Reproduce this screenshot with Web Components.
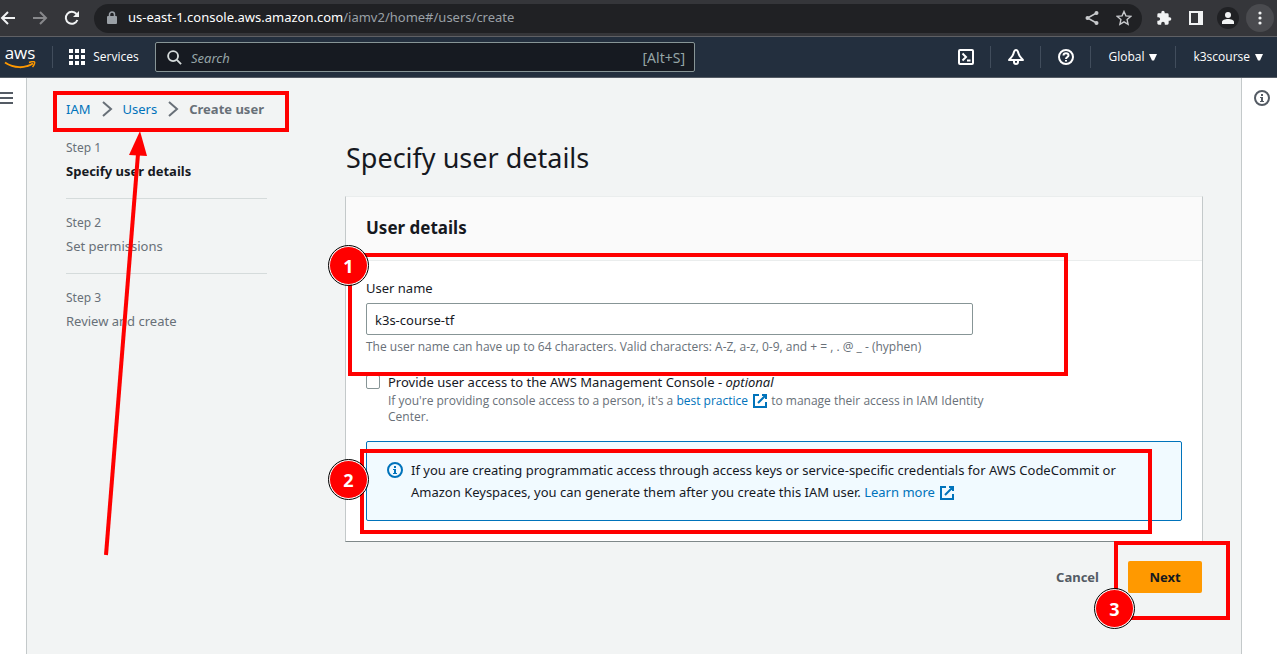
<!DOCTYPE html>
<html lang="en">
<head>
<meta charset="utf-8">
<title>Create user | IAM</title>
<style>
  html { height: 100%; }
  body { margin: 0; min-height: 100%; font-family: "Noto Sans", "Open Sans", sans-serif; font-size: 13px; line-height: 22px; color: #16191f; background: #f2f4f4; }
</style>
</head>
<body>
<iam-app></iam-app>
<script>
const define = (name, html, setup) => {
  const template = document.createElement('template');
  template.innerHTML = html;
  customElements.define(name, class extends HTMLElement {
    constructor() {
      super();
      this.attachShadow({ mode: 'open' }).append(template.content.cloneNode(true));
    }
    connectedCallback() { if (setup) setup(this, this.shadowRoot); }
  });
};

const EXTERNAL = `<svg viewBox="0 0 16 16" fill="none" stroke="currentColor" stroke-width="2"><path d="M10 2h4v4M6 10l8-8M7 2H2v12h12V9"/></svg>`;
const INFO = `<svg viewBox="0 0 16 16"><circle cx="8" cy="8" r="7" fill="none" stroke="currentColor" stroke-width="2"/><path fill="currentColor" d="M7 4h2v2H7zM6 7h3v4h1v1H6v-1h1V8H6z"/></svg>`;

define('browser-bar', `
<style>
  :host { display: flex; align-items: center; gap: 8px; height: 36px; padding: 0 3px 0 0; background: #35363a; border-bottom: 1px solid #5f6064; color: #f1f3f4; }
  button { display: grid; place-items: center; width: 24px; height: 24px; padding: 0; border: 0; background: none; color: inherit; flex: none; }
  button svg { width: 16px; height: 16px; }
  .nav { display: flex; gap: 8px; margin-right: 2px; }
  .nav button:first-child { width: 20px; justify-content: start; }
  .dim { color: #87888b; }
  .address { flex: 1; display: flex; align-items: center; gap: 11px; height: 29px; padding: 0 6px 0 13px; border-radius: 15px; background: #202124; white-space: nowrap; }
  .address span { flex: 1; color: #9aa0a6; padding-bottom: 2px; }
  .address b { font-weight: 400; color: #fff; }
  .address button { color: #c8cacd; }
  .address .share { margin-right: -3px; }
  .lock { width: 10px; height: 13px; margin-bottom: 2px; }
  .address button, .nav button { margin-bottom: 1px; }
  .tools { display: flex; align-items: center; gap: 8px; padding-left: 2px; }
  .avatar { width: 22px; height: 22px; border-radius: 50%; background: #202124; margin: 0 1px; }
  .more { width: 28px; height: 28px; border-radius: 50%; background: #4a4b4f; margin-left: -2px; }
</style>
<div class="nav">
  <button aria-label="Back"><svg viewBox="0 0 16 16" fill="none" stroke="currentColor" stroke-width="2"><path d="M15 8H2M8 2L2 8l6 6"/></svg></button>
  <button class="dim" aria-label="Forward"><svg viewBox="0 0 16 16" fill="none" stroke="currentColor" stroke-width="2"><path d="M1 8h13M8 2l6 6-6 6"/></svg></button>
  <button aria-label="Reload"><svg viewBox="0 0 16 16"><path fill="none" stroke="currentColor" stroke-width="2" d="M13.400 10A6 6 0 1 1 12.500 4"/><path fill="currentColor" d="M15 1v6H9z"/></svg></button>
</div>
<div class="address">
  <svg class="lock" viewBox="0 0 10 13"><path fill="none" stroke="#9aa0a6" stroke-width="1.500" d="M2.500 6V3.500a2.500 2.500 0 0 1 5 0V6"/><rect y="5" width="10" height="8" rx="1" fill="#9aa0a6"/></svg>
  <span><b>us-east-1.console.aws.amazon.com</b>/iamv2/home#/users/create</span>
  <button class="share" aria-label="Share"><svg viewBox="0 0 16 16"><path fill="none" stroke="currentColor" stroke-width="1.500" d="M12.500 3L3.500 8l9 5"/><circle cx="12.500" cy="3" r="2" fill="currentColor"/><circle cx="3.500" cy="8" r="2" fill="currentColor"/><circle cx="12.500" cy="13" r="2" fill="currentColor"/></svg></button>
  <button aria-label="Bookmark"><svg viewBox="0 0 16 16" fill="none" stroke="currentColor" stroke-width="1.400"><path d="M8 1.500l1.900 4.400 4.800.5-3.600 3.200 1 4.700L8 11.800l-4.100 2.500 1-4.700L1.300 6.400l4.800-.5z"/></svg></button>
</div>
<div class="tools">
  <button aria-label="Extensions"><svg viewBox="0 0 24 24"><path fill="currentColor" d="M20.500 11H19V7a2 2 0 0 0-2-2h-4V3.500a2.500 2.500 0 0 0-5 0V5H4a2 2 0 0 0-2 2v3.800h1.500a2.700 2.700 0 0 1 0 5.400H2V20c0 1.100.9 2 2 2h3.800v-1.500a2.700 2.700 0 0 1 5.400 0V22H17a2 2 0 0 0 2-2v-4h1.500a2.500 2.500 0 0 0 0-5z"/></svg></button>
  <button aria-label="Side panel"><svg viewBox="0 0 16 16"><path fill="currentColor" fill-rule="evenodd" d="M1 1h14v14H1zM3 3v10h7V3z"/></svg></button>
  <button class="avatar" aria-label="Profile"><svg viewBox="0 0 16 16" fill="currentColor"><circle cx="8" cy="5" r="3"/><path d="M2 14v-2c0-2 3-3 6-3s6 1 6 3v2z"/></svg></button>
  <button class="more" aria-label="Menu"><svg viewBox="0 0 16 16" fill="currentColor"><circle cx="8" cy="3" r="1.600"/><circle cx="8" cy="8" r="1.600"/><circle cx="8" cy="13" r="1.600"/></svg></button>
</div>`);

define('aws-nav', `
<style>
  :host { display: flex; align-items: center; height: 40px; background: #232f3e; border-bottom: 1px solid #545b64; color: #fff; font-family: "Open Sans", sans-serif; font-size: 12px; }
  button { display: flex; align-items: center; justify-content: center; gap: 5px; height: 22px; padding: 0; border: 0; border-left: 1px solid #414d5c; background: none; color: inherit; font: inherit; box-sizing: border-box; }
  .home { display: grid; justify-items: center; width: 32px; margin-left: 4px; color: inherit; font-size: 17px; line-height: 16px; text-decoration: none; }
  .home svg { width: 32px; height: 8px; }
  .services { gap: 8px; width: 103px; margin-left: 16px; }
  .services svg, .icon svg { width: 16px; height: 16px; }
  .icon { width: 50px; }
  .icon.first { border-color: transparent; }
  .region { padding: 0 18px 0 17px; }
  .account { padding: 0 14px 0 17px; }
  .caret { width: 8px; height: 7px; }
  form { display: flex; align-items: center; gap: 9px; box-sizing: border-box; width: 540px; height: 30px; padding: 2px 9px 0 11px; border: 1px solid #879596; border-radius: 2px; background: #161a21; font-family: "Noto Sans", sans-serif; font-size: 13px; color: #95a5a6; }
  form svg { width: 15px; height: 15px; margin-top: -2px; color: #d5dbdb; }
  form span { font-size: 14px; }
  input { flex: 1; min-width: 0; padding: 0; border: 0; background: none; color: inherit; font: inherit; outline: 0; }
  input::placeholder { color: #95a5a6; font-style: italic; opacity: 1; }
  .space { flex: 1; }
</style>
<a class="home" href="#" aria-label="AWS home">aws<svg viewBox="0 0 32 8"><path fill="none" stroke="#f90" stroke-width="2" d="M1 1.500c9 6 20 6 28 1"/><path fill="none" stroke="#f90" stroke-width="1.500" d="M25 1.500c3-1 5-1 5.500-.5s-.2 3-2 5"/></svg></a>
<button class="services"><svg viewBox="0 0 16 16" fill="#fff"><path d="M0 0h4v4H0zM6 0h4v4H6zM12 0h4v4h-4zM0 6h4v4H0zM6 6h4v4H6zM12 6h4v4h-4zM0 12h4v4H0zM6 12h4v4H6zM12 12h4v4h-4z"/></svg>Services</button>
<form role="search">
  <svg viewBox="0 0 16 16" fill="none" stroke="currentColor" stroke-width="2"><circle cx="6.500" cy="6.500" r="5.300"/><path d="M10.500 10.500L15 15"/></svg>
  <input type="search" placeholder="Search" aria-label="Search"><span>[Alt+S]</span>
</form>
<div class="space"></div>
<button class="icon first" aria-label="CloudShell"><svg viewBox="0 0 16 16" fill="none" stroke="#fff" stroke-width="2"><rect x="1" y="1" width="14" height="14" rx="1"/><path d="M4.500 4.500L8 8l-3.500 3.500M9 11.500h3.500"/></svg></button>
<button class="icon" aria-label="Notifications"><svg viewBox="0 0 16 16" fill="none" stroke="#fff" stroke-width="2"><path stroke-linejoin="round" d="M8 1C6.300 1 6 2.500 5.500 4.500 4.800 7.500 3 8.500 1 11h14c-2-2.500-3.800-3.500-4.500-6.500C10 2.500 9.700 1 8 1zM6 11v2c0 2.500 4 2.500 4 0v-2"/></svg></button>
<button class="icon" aria-label="Help"><svg viewBox="0 0 16 16" fill="none" stroke="#fff" stroke-width="2"><circle cx="8" cy="8" r="7"/><path d="M5.500 6.500c0-3 5-3 5 0C10.500 8 8 8 8 10M8 11v1.500"/></svg></button>
<button class="region">Global <svg class="caret" viewBox="0 0 8 7"><path fill="#fff" d="M0 0h8L5 6.500H3z"/></svg></button>
<button class="account">k3scourse <svg class="caret" viewBox="0 0 8 7"><path fill="#fff" d="M0 0h8L5 6.500H3z"/></svg></button>`);

define('side-rail', `
<style>
  :host { display: block; box-sizing: border-box; background: #fff; color: #545b64; }
  button { display: block; margin: 12px 0; padding: 0; border: 0; background: none; color: inherit; }
  ::slotted(svg) { display: block; }
</style>
<button><slot></slot></button>`, (el, root) => root.querySelector('button').setAttribute('aria-label', el.getAttribute('label')));

define('crumb-trail', `
<style>
  :host { display: block; }
  ol { display: flex; align-items: center; gap: 10px; list-style: none; margin: 0; padding: 0; }
  li { display: flex; align-items: center; gap: 10px; }
  .chevron { width: 12px; height: 16px; }
  a { color: #0073bb; text-decoration: none; }
  b { color: #687078; }
</style>
<nav aria-label="Breadcrumbs"><ol>
  <li><a href="#iam">IAM</a></li>
  <li><svg class="chevron" viewBox="0 0 12 16"><path fill="none" stroke="#687078" stroke-width="2" d="M2 1l8 7-8 7"/></svg><a href="#users">Users</a></li>
  <li><svg class="chevron" viewBox="0 0 12 16"><path fill="none" stroke="#687078" stroke-width="2" d="M2 1l8 7-8 7"/></svg><b>Create user</b></li>
</ol></nav>`);

define('wizard-step', `
<style>
  :host { display: block; padding-bottom: 16px; color: #687078; }
  :host(:not(:last-of-type)) { border-bottom: 1px solid #d5dbdb; margin-bottom: 16px; }
  small { display: block; font-size: 12px; line-height: 16px; margin-bottom: 4px; }
  :host([active]) div { color: #16191f; font-weight: 700; }
</style>
<small></small><div><slot></slot></div>`, (el, root) => { root.querySelector('small').textContent = 'Step ' + el.getAttribute('number'); });

define('detail-card', `
<style>
  :host { display: block; background: #fff; border: 1px solid #eaeded; border-left-color: #c4c9ca; border-right-color: #c4c9ca; border-bottom-color: #7f8889; }
  h2 { margin: 0; padding: 19px 20px 20px; font-size: 17px; line-height: 24px; background: #fafafa; border-bottom: 1px solid #eaeded; }
  div { padding: 16px 20px 20px; }
</style>
<h2><slot name="title"></slot></h2><div><slot></slot></div>`);

define('text-field', `
<style>
  :host { display: block; max-width: 607px; }
  label { display: block; margin-bottom: 4px; }
  input { display: block; box-sizing: border-box; width: 100%; height: 32px; padding: 2px 8px 0; border: 1px solid #879596; border-radius: 2px; background: #fff; color: inherit; font: inherit; }
  p { margin: 4px 0 0; font-family: "Open Sans", sans-serif; font-size: 12px; line-height: 16px; color: #687078; }
</style>
<label for="field"></label><input id="field" type="text" aria-describedby="hint"><p id="hint"><slot></slot></p>`, (el, root) => {
  root.querySelector('label').textContent = el.getAttribute('label');
  root.querySelector('input').value = el.getAttribute('value');
});

define('check-field', `
<style>
  :host { display: grid; grid-template-columns: 14px 1fr; column-gap: 8px; max-width: 640px; }
  input { appearance: none; box-sizing: border-box; width: 14px; height: 14px; margin: 4px 0; border: 1px solid #879596; border-radius: 2px; background: #fff; }
  p { grid-column: 2; margin: 0; font-family: "Open Sans", sans-serif; font-size: 12px; line-height: 16px; color: #687078; }
</style>
<input id="check" type="checkbox"><label for="check"><slot name="label"></slot></label><p><slot></slot></p>`);

define('external-link', `
<style>
  :host { display: inline; }
  a { color: #0073bb; text-decoration: none; white-space: nowrap; }
  svg { width: 16px; height: 16px; margin: -2px 0 -4px 4px; }
</style>
<a href="#"><slot></slot>${EXTERNAL}</a>`);

define('info-alert', `
<style>
  :host { display: flex; gap: 8px; padding: 17px 20px; border: 1px solid #0073bb; border-radius: 2px; background: #f1faff; }
  svg { flex: none; width: 16px; height: 16px; margin-top: 3px; color: #0073bb; }
</style>
${INFO}<div><slot></slot></div>`);

define('action-bar', `
<style>
  :host { display: flex; justify-content: flex-end; gap: 8px; padding-right: 1px; }
  button { height: 32px; padding: 0 21px; border: 0; border-radius: 2px; background: none; color: #545b64; font: inherit; font-weight: 700; }
  .primary { min-width: 74px; background: #f90; color: #16191f; }
</style>
<button>Cancel</button><button class="primary">Next</button>`);

define('mark-box', `
<style>
  :host { position: absolute; box-sizing: border-box; border: 4px solid #f00; pointer-events: none; }
  b { position: absolute; display: grid; place-items: center; width: 37px; height: 37px; border: 1px solid #fff; border-radius: 50%; outline: 1px solid #000; background: #f00; color: #fff; font-size: 18px; }
  :host([corner=top]) b { left: -23px; top: -11px; }
  :host([corner=left]) b { left: -35px; top: 7px; }
  :host([corner=bottom]) b { left: -23px; bottom: -12px; }
</style>`, (el, root) => {
  if (!el.hasAttribute('number')) return;
  const badge = document.createElement('b');
  badge.textContent = el.getAttribute('number');
  root.append(badge);
});

define('iam-app', `
<style>
  :host { display: flex; flex-direction: column; min-height: 100vh; }
  .shell { flex: 1; display: grid; grid-template-columns: 27px 1fr 36px; }
  .left { border-right: 1px solid #c4c9ca; }
  .right { border-left: 1px solid #c4c9ca; padding-left: 12px; }
  main { position: relative; padding: 20px 38px 24px 39px; }
  .columns { display: grid; grid-template-columns: 201px 1fr; column-gap: 78px; margin-top: 20px; }
  h1 { margin: 0 0 20px 1px; font-size: 27px; line-height: 36px; font-weight: 400; }
  check-field { margin-top: 16px; }
  info-alert { margin-top: 16px; }
  action-bar { margin-top: 19px; }
  .trail { left: 26px; top: 13px; width: 236px; height: 41px; }
  .form { position: relative; }
  .name { left: 3px; top: 113px; width: 720px; height: 123px; }
  .note { left: 15px; top: 309px; width: 792px; height: 85px; }
  .submit { right: -27px; top: 401px; width: 116px; height: 79px; }
  .arrow { position: absolute; left: 74px; top: 52px; width: 50px; height: 426px; pointer-events: none; }
</style>
<browser-bar></browser-bar>
<aws-nav></aws-nav>
<div class="shell">
  <side-rail class="left" label="Open navigation"><svg width="13" height="16" viewBox="0 0 13 16"><path stroke="currentColor" stroke-width="2" d="M0 3h13M0 8h13M0 13h13"/></svg></side-rail>
  <main>
    <crumb-trail></crumb-trail>
    <div class="columns">
      <nav aria-label="Steps">
        <wizard-step number="1" active>Specify user details</wizard-step>
        <wizard-step number="2">Set permissions</wizard-step>
        <wizard-step number="3">Review and create</wizard-step>
      </nav>
      <section class="form">
        <h1>Specify user details</h1>
        <detail-card>
          <span slot="title">User details</span>
          <text-field label="User name" value="k3s-course-tf">The user name can have up to 64 characters. Valid characters: A-Z, a-z, 0-9, and + = , . @ _ - (hyphen)</text-field>
          <check-field><span slot="label">Provide user access to the AWS Management Console - <i>optional</i></span>If you're providing console access to a person, it's a <external-link>best practice</external-link> to manage their access in IAM Identity Center.</check-field>
          <info-alert>If you are creating programmatic access through access keys or service-specific credentials for AWS CodeCommit or Amazon Keyspaces, you can generate them after you create this IAM user. <external-link>Learn more</external-link></info-alert>
        </detail-card>
        <action-bar></action-bar>
        <mark-box class="name" number="1" corner="top"></mark-box>
        <mark-box class="note" number="2" corner="left"></mark-box>
        <mark-box class="submit" number="3" corner="bottom"></mark-box>
      </section>
    </div>
    <mark-box class="trail"></mark-box>
    <svg class="arrow" viewBox="0 0 50 426"><path stroke="#f00" stroke-width="4" d="M5 425L37 24"/><path fill="#f00" d="M39 1l7 25-18-1z"/></svg>
  </main>
  <side-rail class="right" label="Info">${INFO.replace('<svg', '<svg width="16" height="16"')}</side-rail>
</div>`);
</script>
</body>
</html>
